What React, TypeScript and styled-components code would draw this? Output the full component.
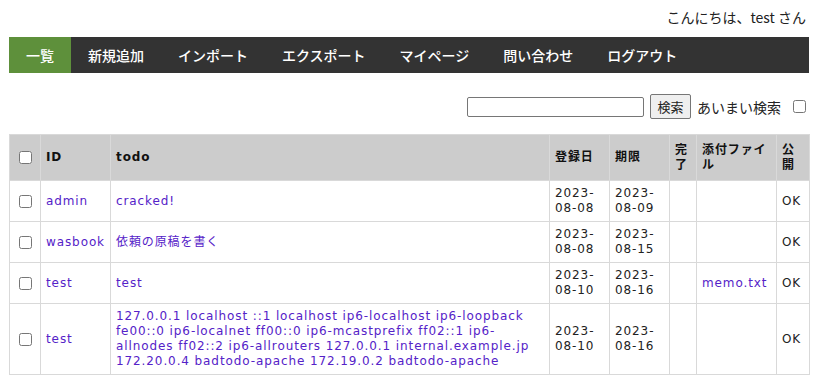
import React from "react";
import styled, { createGlobalStyle } from "styled-components";

const GlobalStyle = createGlobalStyle`
  html, body {
    margin: 0;
    padding: 0;
    background: #fff;
  }
  body {
    font-family: "Noto Sans CJK JP", "DejaVu Sans", sans-serif;
    color: #222;
  }
`;

const Page = styled.div`
  width: 800px;
  margin-left: 9px;
  padding-top: 7px;
`;

const Greeting = styled.div`
  text-align: right;
  font-size: 14px;
  line-height: 20px;
  padding-right: 3px;
  height: 23px;
`;

const Nav = styled.nav`
  display: flex;
  background: #333333;
  height: 36px;
  margin-top: 7px;
`;

const NavItem = styled.a<{ active?: boolean }>`
  display: flex;
  align-items: center;
  padding: 0 17px;
  font-size: 14px;
  font-weight: 500;
  color: #fff;
  text-decoration: none;
  background: ${({ active }) => (active ? "#5e903b" : "transparent")};
`;

const SearchRow = styled.form`
  display: flex;
  justify-content: flex-end;
  align-items: center;
  gap: 6px;
  margin-top: 21px;
  padding-right: 3px;
  height: 25px;
`;

const SearchInput = styled.input`
  width: 177px;
  height: 20px;
  box-sizing: border-box;
  border: 1px solid #767676;
  border-radius: 2px;
  padding: 0 3px;
`;

const SearchButton = styled.button`
  width: 41px;
  height: 25px;
  box-sizing: border-box;
  border: 1px solid #767676;
  border-radius: 2px;
  background: #efefef;
  font-family: "Noto Sans CJK JP", sans-serif;
  font-size: 13px;
  color: #222;
  padding: 0;
`;

const FuzzyLabel = styled.label`
  font-size: 14px;
  color: #222;
  margin-right: 6px;
`;

const Box = styled.input.attrs({ type: "checkbox" })`
  width: 13px;
  height: 13px;
  margin: 0;
  vertical-align: middle;
`;

const Table = styled.table`
  margin-top: 15px;
  width: 800px;
  border-collapse: collapse;
  table-layout: fixed;
  font-family: "DejaVu Sans", "Noto Sans CJK JP", sans-serif;
  font-size: 12px;
  letter-spacing: 0.9px;
  line-height: 15px;
`;

const HeadCell = styled.th<{ w: number; center?: boolean }>`
  box-sizing: border-box;
  width: ${({ w }) => w}px;
  background: #cccccc;
  border: 1px solid #d9d9d9;
  padding: 7px 4px 7px 5px;
  height: 46px;
  text-align: ${({ center }) => (center ? "center" : "left")};
  font-weight: bold;
  color: #111;
  vertical-align: middle;
`;

const Cell = styled.td<{ center?: boolean }>`
  border: 1px solid #d9d9d9;
  padding: 5px 4px 5px 5px;
  text-align: ${({ center }) => (center ? "center" : "left")};
  vertical-align: middle;
  color: #222;
  word-break: break-word;
`;

const Link = styled.a<{ nowrap?: boolean }>`
  color: #5522c8;
  text-decoration: none;
  white-space: ${({ nowrap }) => (nowrap ? "nowrap" : "normal")};
`;

type Todo = {
  id: string;
  todo: string;
  created: string;
  due: string;
  file?: string;
};

const todos: Todo[] = [
  { id: "admin", todo: "cracked!", created: "2023-08-08", due: "2023-08-09" },
  { id: "wasbook", todo: "依頼の原稿を書く", created: "2023-08-08", due: "2023-08-15" },
  { id: "test", todo: "test", created: "2023-08-10", due: "2023-08-16", file: "memo.txt" },
  {
    id: "test",
    todo:
      "127.0.0.1 localhost ::1 localhost ip6-localhost ip6-loopback fe00::0 ip6-localnet ff00::0 ip6-mcastprefix ff02::1 ip6-allnodes ff02::2 ip6-allrouters 127.0.0.1 internal.example.jp 172.20.0.4 badtodo-apache 172.19.0.2 badtodo-apache",
    created: "2023-08-10",
    due: "2023-08-16",
  },
];

const splitDate = (d: string) => (
  <>
    {d.slice(0, 5)}
    <br />
    {d.slice(5)}
  </>
);

const menu = ["一覧", "新規追加", "インポート", "エクスポート", "マイページ", "問い合わせ", "ログアウト"];

export default function App() {
  return (
    <>
      <GlobalStyle />
      <Page>
        <Greeting>こんにちは、test さん</Greeting>
        <Nav>
          {menu.map((m, i) => (
            <NavItem key={m} active={i === 0} href="#">
              {m}
            </NavItem>
          ))}
        </Nav>
        <SearchRow onSubmit={(e) => e.preventDefault()}>
          <SearchInput type="text" />
          <SearchButton type="submit">検索</SearchButton>
          <FuzzyLabel>あいまい検索</FuzzyLabel>
          <Box />
        </SearchRow>
        <Table>
          <thead>
            <tr>
              <HeadCell w={31} center>
                <Box />
              </HeadCell>
              <HeadCell w={70}>ID</HeadCell>
              <HeadCell w={439}>todo</HeadCell>
              <HeadCell w={60}>登録日</HeadCell>
              <HeadCell w={60}>期限</HeadCell>
              <HeadCell w={27}>完了</HeadCell>
              <HeadCell w={80}>添付ファイル</HeadCell>
              <HeadCell w={33}>公開</HeadCell>
            </tr>
          </thead>
          <tbody>
            {todos.map((t, i) => (
              <tr key={i}>
                <Cell center>
                  <Box />
                </Cell>
                <Cell>
                  <Link href="#" nowrap>
                    {t.id}
                  </Link>
                </Cell>
                <Cell>
                  <Link href="#">{t.todo}</Link>
                </Cell>
                <Cell>{splitDate(t.created)}</Cell>
                <Cell>{splitDate(t.due)}</Cell>
                <Cell></Cell>
                <Cell>{t.file && <Link href="#">{t.file}</Link>}</Cell>
                <Cell>OK</Cell>
              </tr>
            ))}
          </tbody>
        </Table>
      </Page>
    </>
  );
}
